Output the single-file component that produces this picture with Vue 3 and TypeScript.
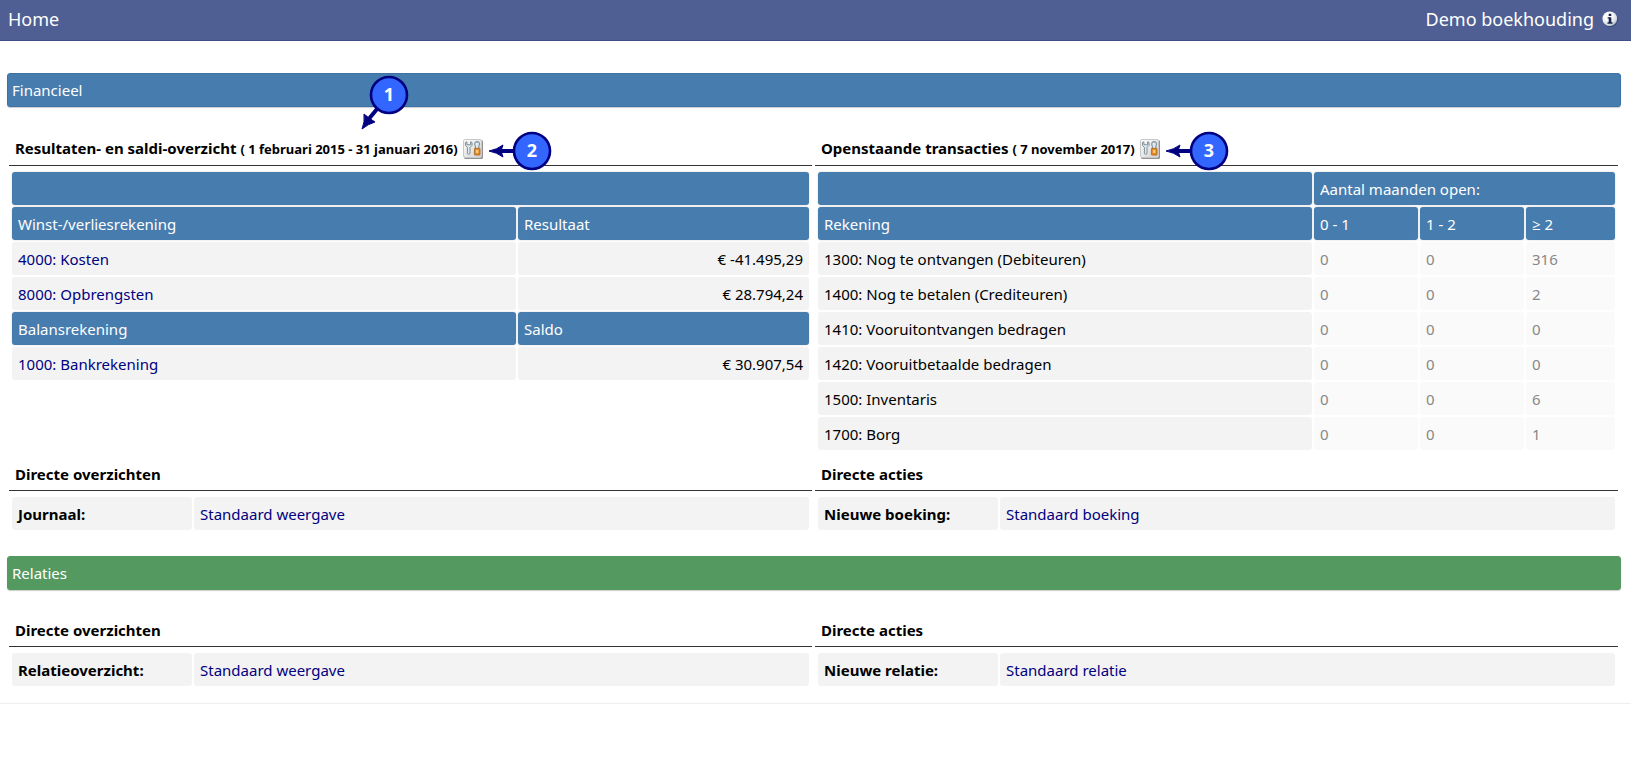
<script setup lang="ts">
interface Account { label: string; amount: string }
interface Transaction { label: string; counts: string[] }
interface Shortcut { heading: string; label: string; link: string }

const profitLoss: Account[] = [
  { label: '4000: Kosten', amount: '€ -41.495,29' },
  { label: '8000: Opbrengsten', amount: '€ 28.794,24' },
]
const balance: Account[] = [{ label: '1000: Bankrekening', amount: '€ 30.907,54' }]

const transactions: Transaction[] = [
  { label: '1300: Nog te ontvangen (Debiteuren)', counts: ['0', '0', '316'] },
  { label: '1400: Nog te betalen (Crediteuren)', counts: ['0', '0', '2'] },
  { label: '1410: Vooruitontvangen bedragen', counts: ['0', '0', '0'] },
  { label: '1420: Vooruitbetaalde bedragen', counts: ['0', '0', '0'] },
  { label: '1500: Inventaris', counts: ['0', '0', '6'] },
  { label: '1700: Borg', counts: ['0', '0', '1'] },
]

const financeShortcuts: Shortcut[] = [
  { heading: 'Directe overzichten', label: 'Journaal:', link: 'Standaard weergave' },
  { heading: 'Directe acties', label: 'Nieuwe boeking:', link: 'Standaard boeking' },
]
const relationShortcuts: Shortcut[] = [
  { heading: 'Directe overzichten', label: 'Relatieoverzicht:', link: 'Standaard weergave' },
  { heading: 'Directe acties', label: 'Nieuwe relatie:', link: 'Standaard relatie' },
]
</script>

<template>
  <header class="topbar">
    <h1>Home</h1>
    <div class="admin">
      <span>Demo boekhouding</span>
      <button class="icon-button" type="button" aria-label="Informatie">
        <svg width="16" height="16" viewBox="0 0 16 16">
          <defs>
            <radialGradient id="info-ball" cx="0.38" cy="0.3" r="0.75">
              <stop offset="0.35" stop-color="#ffffff" />
              <stop offset="0.8" stop-color="#d3dade" />
              <stop offset="1" stop-color="#8898a8" />
            </radialGradient>
          </defs>
          <circle cx="8.3" cy="8.5" r="7.5" fill="#2f4172" />
          <circle cx="7.8" cy="7.8" r="7.4" fill="url(#info-ball)" />
          <path d="M6.7 2.8h2.6v2.3H6.7zM5.6 6.2h3.7v5.1h1.2v1.4H5.5v-1.4h1.2V7.6H5.6z" fill="#15234f" />
        </svg>
      </button>
    </div>
  </header>

  <main>
    <section>
      <h2 class="bar finance">Financieel</h2>
      <div class="columns">
        <div class="column">
          <div class="heading">
            <h3>Resultaten- en saldi-overzicht <small>( 1 februari 2015 - 31 januari 2016)</small></h3>
            <button class="icon-button" type="button" aria-label="Instellingen resultaten">
              <svg width="20" height="20" viewBox="0 0 20 20">
                <defs>
                  <linearGradient id="tool-face" x1="0" y1="0" x2="1" y2="1">
                    <stop offset="0" stop-color="#ffffff" />
                    <stop offset="1" stop-color="#d0d0d0" />
                  </linearGradient>
                </defs>
                <rect x="1" y="1" width="19" height="19" rx="1.5" fill="#929292" />
                <rect x="0.5" y="0.5" width="18" height="18" rx="1.5" fill="url(#tool-face)" stroke="#c8c8c8" />
                <path d="M2.4 3.4v3l2 2v6.2q1.3 1.4 2.6 0V8.4l2-2v-3L7.6 2.8v3H3.9v-3z" fill="#e3ebef" stroke="#72828c" stroke-width="0.9" />
                <path d="M12.4 9.5V7.6L11.6 5q.2-2.2 2.5-2.4 2.3.2 2.5 2.4l-.8 2.6v1.9" fill="#dfe9ee" stroke="#7e929d" stroke-width="1.1" />
                <rect x="11.4" y="9.3" width="5.6" height="6.7" rx="0.6" fill="#e48b26" stroke="#aa5e16" stroke-width="0.8" />
                <rect x="13" y="11" width="2.3" height="3" fill="#f7c982" />
              </svg>
            </button>
            <svg class="marker marker-side" width="64" height="40" viewBox="0 0 64 40">
              <path d="M26 20H12" stroke="#000080" stroke-width="4" />
              <path d="M1 20Q9 18.5 15 14L13 20 15 26Q9 21.5 1 20z" fill="#000080" stroke="#000080" />
              <circle cx="44" cy="20" r="18" fill="#3366ff" stroke="#000080" stroke-width="2.6" />
              <text x="44" y="26" text-anchor="middle">2</text>
            </svg>
            <svg class="marker marker-over" width="52" height="56" viewBox="0 0 52 56">
              <path d="M18 34 9 45" stroke="#000080" stroke-width="4" />
              <path d="M3 54Q6 47 5 39L10 43 16 47Q9 49 3 54z" fill="#000080" stroke="#000080" />
              <circle cx="30" cy="20" r="18" fill="#3366ff" stroke="#000080" stroke-width="2.6" />
              <text x="30" y="26" text-anchor="middle">1</text>
            </svg>
          </div>
          <table class="grid">
            <colgroup>
              <col /><col class="amount-col" />
            </colgroup>
            <thead>
              <tr><th colspan="2"></th></tr>
              <tr><th>Winst-/verliesrekening</th><th>Resultaat</th></tr>
            </thead>
            <tbody>
              <tr v-for="row in profitLoss" :key="row.label">
                <td><a href="#">{{ row.label }}</a></td>
                <td class="amount">{{ row.amount }}</td>
              </tr>
              <tr><th>Balansrekening</th><th>Saldo</th></tr>
              <tr v-for="row in balance" :key="row.label">
                <td><a href="#">{{ row.label }}</a></td>
                <td class="amount">{{ row.amount }}</td>
              </tr>
            </tbody>
          </table>
        </div>

        <div class="column">
          <div class="heading">
            <h3>Openstaande transacties <small>( 7 november 2017)</small></h3>
            <button class="icon-button" type="button" aria-label="Instellingen transacties">
              <svg width="20" height="20" viewBox="0 0 20 20">
                <rect x="1" y="1" width="19" height="19" rx="1.5" fill="#929292" />
                <rect x="0.5" y="0.5" width="18" height="18" rx="1.5" fill="url(#tool-face)" stroke="#c8c8c8" />
                <path d="M2.4 3.4v3l2 2v6.2q1.3 1.4 2.6 0V8.4l2-2v-3L7.6 2.8v3H3.9v-3z" fill="#e3ebef" stroke="#72828c" stroke-width="0.9" />
                <path d="M12.4 9.5V7.6L11.6 5q.2-2.2 2.5-2.4 2.3.2 2.5 2.4l-.8 2.6v1.9" fill="#dfe9ee" stroke="#7e929d" stroke-width="1.1" />
                <rect x="11.4" y="9.3" width="5.6" height="6.7" rx="0.6" fill="#e48b26" stroke="#aa5e16" stroke-width="0.8" />
                <rect x="13" y="11" width="2.3" height="3" fill="#f7c982" />
              </svg>
            </button>
            <svg class="marker marker-side" width="64" height="40" viewBox="0 0 64 40">
              <path d="M26 20H12" stroke="#000080" stroke-width="4" />
              <path d="M1 20Q9 18.5 15 14L13 20 15 26Q9 21.5 1 20z" fill="#000080" stroke="#000080" />
              <circle cx="44" cy="20" r="18" fill="#3366ff" stroke="#000080" stroke-width="2.6" />
              <text x="44" y="26" text-anchor="middle">3</text>
            </svg>
          </div>
          <table class="grid">
            <colgroup>
              <col /><col class="month" /><col class="month" /><col class="older" />
            </colgroup>
            <thead>
              <tr><th></th><th colspan="3">Aantal maanden open:</th></tr>
              <tr><th>Rekening</th><th>0 - 1</th><th>1 - 2</th><th>≥ 2</th></tr>
            </thead>
            <tbody>
              <tr v-for="row in transactions" :key="row.label">
                <td>{{ row.label }}</td>
                <td v-for="(count, i) in row.counts" :key="i" class="count">{{ count }}</td>
              </tr>
            </tbody>
          </table>
        </div>
      </div>

      <div class="columns">
        <div v-for="item in financeShortcuts" :key="item.label" class="column">
          <div class="heading"><h3>{{ item.heading }}</h3></div>
          <table class="grid">
            <tbody>
              <tr>
                <th class="label" scope="row">{{ item.label }}</th>
                <td><a href="#">{{ item.link }}</a></td>
              </tr>
            </tbody>
          </table>
        </div>
      </div>
    </section>

    <section>
      <h2 class="bar relations">Relaties</h2>
      <div class="columns">
        <div v-for="item in relationShortcuts" :key="item.label" class="column">
          <div class="heading"><h3>{{ item.heading }}</h3></div>
          <table class="grid">
            <tbody>
              <tr>
                <th class="label" scope="row">{{ item.label }}</th>
                <td><a href="#">{{ item.link }}</a></td>
              </tr>
            </tbody>
          </table>
        </div>
      </div>
    </section>
  </main>
</template>

<style>
body {
  background: #fff;
  color: #000;
  font: 15px/24px "Segoe UI", "Noto Sans", "Open Sans", sans-serif;
}
</style>

<style scoped>
h1, h2, h3 { margin: 0; font-weight: 400; }
a { color: #000080; text-decoration: none; }
.topbar {
  display: flex;
  align-items: center;
  justify-content: space-between;
  box-sizing: border-box;
  height: 41px;
  padding: 0 13px 2px 8px;
  background: #4f5f93;
  border-bottom: 1px solid #3f4f86;
  color: #fff;
  font-size: 18px;
}
h1 { font-size: 18px; }
.admin { display: flex; align-items: center; gap: 8px; }
.icon-button {
  display: flex;
  flex: none;
  padding: 0;
  border: 0;
  background: none;
  cursor: pointer;
}
main {
  padding: 32px 10px 13px 7px;
  border-bottom: 1px solid #eee;
}
.bar {
  box-sizing: border-box;
  height: 34px;
  margin-bottom: 22px;
  padding: 0 4px;
  border: 1px solid;
  border-radius: 3px;
  box-shadow: 0 1px 1px #ccc;
  font-size: 15px;
  line-height: 32px;
  color: #fff;
}
.finance { background: #477cae; border-color: #3d72a6; }
.relations { margin: 22px 0 20px; background: #549a60; border-color: #549a60; }
.columns {
  display: grid;
  grid-template-columns: 1fr 1fr;
  gap: 3px;
  padding: 0 3px 0 2px;
}
.heading {
  display: flex;
  align-items: center;
  gap: 5px;
  position: relative;
  box-sizing: border-box;
  height: 37px;
  padding: 3px 0 0 6px;
  border-bottom: 1px solid #333;
}
h3 { font-size: 15px; font-weight: 700; white-space: nowrap; }
h3 small { font-size: 13px; }
.grid {
  width: 100%;
  padding: 4px 1px 2px;
  border-collapse: separate;
  border-spacing: 2px;
  table-layout: fixed;
}
.grid th, .grid td {
  box-sizing: border-box;
  height: 33px;
  padding: 0 6px;
  border-radius: 3px;
  background: #f3f3f3;
  text-align: left;
  white-space: nowrap;
}
.grid th {
  background: #477cae;
  box-shadow: 0 0 2px #ccc;
  color: #fff;
  font-weight: 400;
}
.grid th.label {
  width: 180px;
  background: #f3f3f3;
  box-shadow: none;
  color: #000;
  font-weight: 700;
}
.amount-col { width: 291px; }
.month { width: 104px; }
.older { width: 89px; }
.grid .amount { text-align: right; }
.grid .count { background: #fafafa; color: #888; }
.marker { z-index: 1; overflow: visible; }
.marker text { fill: #fff; font-size: 18px; font-weight: 700; }
.marker-side { position: relative; flex: none; margin-top: 4px; }
.marker-over { position: absolute; left: 350px; top: -54px; }
</style>
